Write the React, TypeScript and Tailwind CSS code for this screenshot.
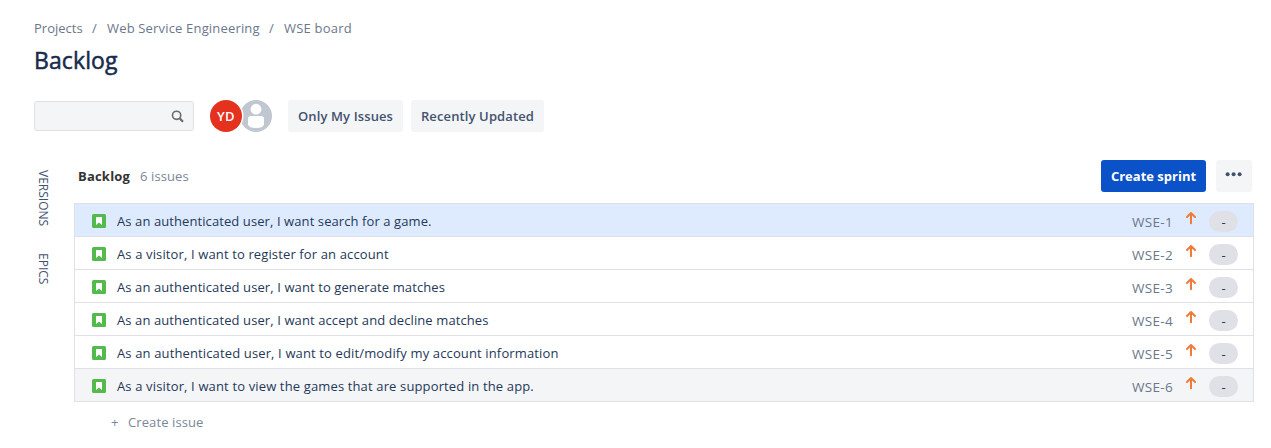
const issues = [
  { key: 'WSE-1', title: 'As an authenticated user, I want search for a game.', row: 'bg-[#deebff]', track: 'tracking-[0.09px]' },
  { key: 'WSE-2', title: 'As a visitor, I want to register for an account', row: 'bg-white', track: 'tracking-[0.13px]' },
  { key: 'WSE-3', title: 'As an authenticated user, I want to generate matches', row: 'bg-white', track: 'tracking-[0.1px]' },
  { key: 'WSE-4', title: 'As an authenticated user, I want accept and decline matches', row: 'bg-white', track: 'tracking-[0.1px]' },
  { key: 'WSE-5', title: 'As an authenticated user, I want to edit/modify my account information', row: 'bg-white', track: 'tracking-[0.135px]' },
  { key: 'WSE-6', title: 'As a visitor, I want to view the games that are supported in the app.', row: 'bg-[#f4f5f7]', track: 'tracking-[0.14px]' },
];

function StoryIcon() {
  return (
    <svg className="mt-0.5 block shrink-0" width="14" height="14" viewBox="0 0 14 14">
      <rect width="14" height="14" rx="1.5" fill="#54ba4e" />
      <path d="M4 3.6Q4 3 4.6 3H9.4Q10 3 10 3.6V11L7 8.4L4 11Z" fill="#fff" />
    </svg>
  );
}

function PriorityIcon() {
  return (
    <svg className="block shrink-0" width="12" height="14" viewBox="0 0 12 14" fill="none" stroke="#f07a38" strokeWidth="2" strokeLinecap="round" strokeLinejoin="round">
      <path d="M6 12.2V2.4M2 6L6 2L10 6" />
    </svg>
  );
}

export default function App() {
  return (
    <div className="flex h-[448px] w-[1271px] flex-col bg-white pl-[34px] font-['Open_Sans','Noto_Sans',sans-serif] text-[13px] leading-5 whitespace-nowrap text-[#172b4d]">
      <nav className="mt-[18px] flex h-5 text-[#6b778c]">
        <span className="w-[58px]">Projects</span>
        <span className="w-[15px]">/</span>
        <span className="w-[162px] tracking-[0.17px]">Web Service Engineering</span>
        <span className="w-[15px]">/</span>
        <span className="tracking-[0.2px]">WSE board</span>
      </nav>
      <h1 className="mt-2 h-7 text-[23px] leading-7 font-medium tracking-[0.1px] [-webkit-text-stroke:0.5px_#172b4d]">Backlog</h1>

      <div className="mt-[26px] flex h-8 items-center">
        <div className="flex h-[30px] w-40 items-center justify-end rounded-[3px] border border-[#dfe1e6] bg-[#f4f5f7] pr-[9px]">
          <svg className="mt-px" width="13" height="13" viewBox="0 0 13 13" fill="none" stroke="#6a6a6a">
            <circle cx="5.6" cy="5.3" r="4.1" strokeWidth="1.6" />
            <path d="M8.6 8.3L12 11.7" strokeWidth="2.2" />
          </svg>
        </div>
        <div className="relative z-10 ml-4 flex size-8 items-center justify-center rounded-full bg-[#e5321f] font-semibold tracking-[0.3px] text-white">YD</div>
        <svg className="-ml-0.5" width="32" height="32" viewBox="0 0 32 32">
          <circle cx="16" cy="16" r="16" fill="#c1c7d0" />
          <circle cx="-14" cy="16" r="17.5" fill="#fff" />
          <circle cx="16" cy="9.2" r="5.4" fill="#fff" />
          <path d="M8 18.5Q8 16 10.5 16H21.5Q24 16 24 18.5V24Q24 28 16 28Q8 28 8 24Z" fill="#fff" />
        </svg>
        <button className="ml-4 h-8 w-[115px] rounded-[3px] bg-[#f4f5f7] font-semibold tracking-[0.12px] text-[#42526e]">Only My Issues</button>
        <button className="ml-2 h-8 w-[133px] rounded-[3px] bg-[#f4f5f7] font-semibold tracking-[0.12px] text-[#42526e]">Recently Updated</button>
      </div>

      <div className="mt-7 flex">
        <aside className="flex w-10 flex-col text-[12px] text-[#42526e]">
          <span className="mt-[10px] h-[57px] w-[18px] leading-[18px] [writing-mode:vertical-rl]">VERSIONS</span>
          <span className="mt-[26px] h-8 w-[18px] leading-[18px] [writing-mode:vertical-rl]">EPICS</span>
        </aside>
        <main className="w-[1180px]">
          <header className="flex h-8 items-center pr-0.5 pl-1">
            <h2 className="w-[62px] font-bold tracking-[0.2px] text-[#333333]">Backlog</h2>
            <span className="tracking-[0.1px] text-[#7a869a]">6 issues</span>
            <button className="ml-auto h-8 w-[105px] rounded-[3px] bg-[#0b51c8] font-bold text-white">Create sprint</button>
            <button className="ml-[10px] flex h-8 w-9 justify-center rounded-[3px] bg-[#f4f5f7] pt-3">
              <svg width="18" height="5" viewBox="0 0 18 5" fill="#42526e">
                <circle cx="2.6" cy="2.2" r="2" /><circle cx="8.6" cy="2.2" r="2" /><circle cx="14.6" cy="2.2" r="2" />
              </svg>
            </button>
          </header>
          <ul className="mt-[11px] border-x border-b border-[#dfe1e6]">
            {issues.map((issue) => (
              <li key={issue.key} className={`flex h-[33px] items-center border-t border-[#dfe1e6] pl-[17px] pr-[15px] text-[#253858] ${issue.row}`}>
                <StoryIcon />
                <span className={`ml-[11px] flex-1 pt-0.5 ${issue.track}`}>{issue.title}</span>
                <span className="w-[53px] pt-1 text-[13.5px] tracking-[0.3px] text-[#6b778c]">{issue.key}</span>
                <span className="-mt-[5px]"><PriorityIcon /></span>
                <span className="mt-[3px] ml-3 h-[21px] w-[29px] rounded-full bg-[#dfe1e6] text-center leading-[22px]">-</span>
              </li>
            ))}
          </ul>
          <div className="mt-[10px] flex pl-9 text-[#7a869a]">
            <span className="w-[18px] pl-px">+</span>
            <span className="tracking-[0.1px]">Create issue</span>
          </div>
        </main>
      </div>
    </div>
  );
}
